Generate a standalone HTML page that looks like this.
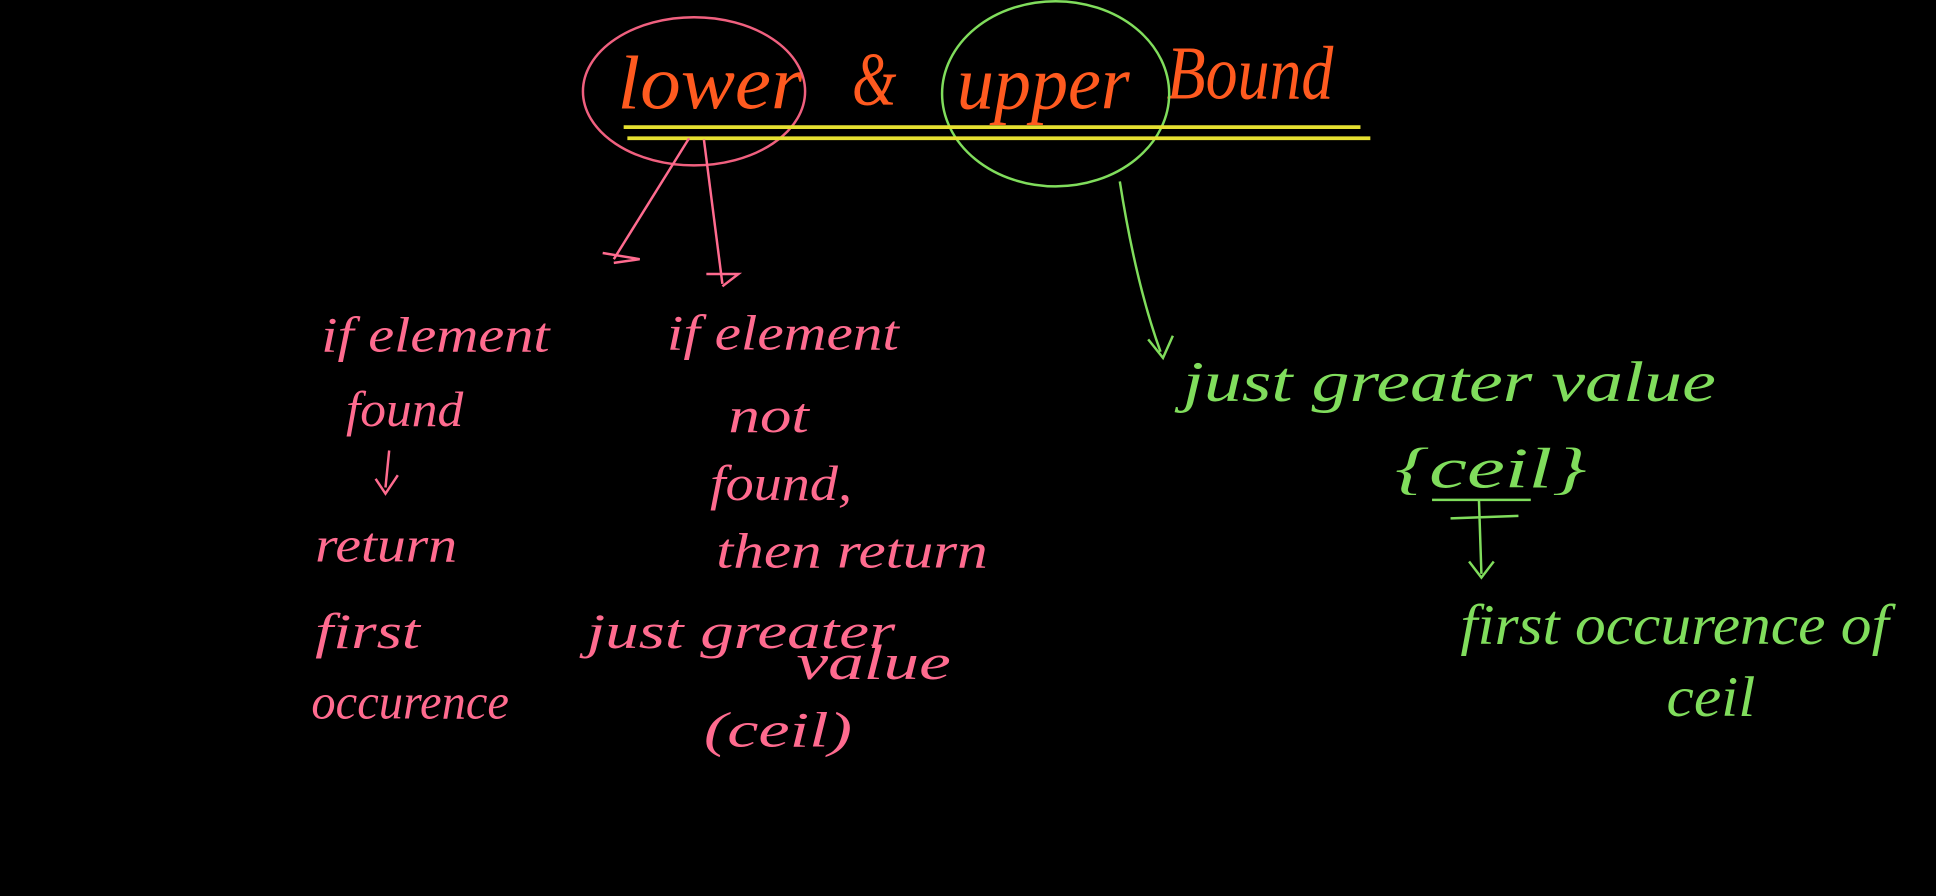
<!DOCTYPE html>
<html><head><meta charset="utf-8">
<style>
html,body{margin:0;padding:0;background:#000;width:1936px;height:896px;overflow:hidden}
svg{display:block}
text{font-family:"Liberation Serif",serif;font-style:italic}
</style></head>
<body>
<svg width="1936" height="896" viewBox="0 0 1568 726" xmlns="http://www.w3.org/2000/svg">
<rect width="1568" height="726" fill="#000"/>
<g fill="#ff5a1f" font-size="62" lengthAdjust="spacingAndGlyphs">
<text x="500" y="88" textLength="150" lengthAdjust="spacingAndGlyphs">lower</text>
<text x="690" y="85" textLength="36" lengthAdjust="spacingAndGlyphs">&amp;</text>
<text x="775" y="88" textLength="140" lengthAdjust="spacingAndGlyphs">upper</text>
<text x="945" y="80" textLength="135" lengthAdjust="spacingAndGlyphs">Bound</text>
</g>
<ellipse cx="562" cy="74" rx="90" ry="60" fill="none" stroke="#f0607f" stroke-width="2"/>
<ellipse cx="855" cy="76" rx="92" ry="75" fill="none" stroke="#80dd5c" stroke-width="2"/>
<line x1="505" y1="103" x2="1102" y2="103" stroke="#e6e030" stroke-width="3"/>
<line x1="508" y1="112" x2="1110" y2="112" stroke="#e6e030" stroke-width="3"/>
<g stroke="#ff6b8f" stroke-width="2" fill="none">
<path d="M558 112 L497 210"/><path d="M488 205 L518 210 L497 213"/>
<path d="M570 113 L585 230"/><path d="M572 222 L598 222 L585 232"/>
<path d="M315 365 L312 395 M304 388 L312 400 L322 385"/>
</g>
<g stroke="#80dd5c" stroke-width="2" fill="none">
<path d="M907 147 Q920 230 940 285"/><path d="M930 275 L942 290 L950 272"/>
<path d="M1198 405 L1200 465 M1175 420 L1230 418 M1190 455 L1200 468 L1210 455"/>
<path d="M1160 405 L1240 405"/>
</g>
<g fill="#ff6b8f" font-size="40">
<text x="260" y="285" textLength="185" lengthAdjust="spacingAndGlyphs">if element</text>
<text x="280" y="345" textLength="95" lengthAdjust="spacingAndGlyphs">found</text>
<text x="255" y="455" textLength="115" lengthAdjust="spacingAndGlyphs">return</text>
<text x="255" y="525" textLength="85" lengthAdjust="spacingAndGlyphs">first</text>
<text x="252" y="582" textLength="160" lengthAdjust="spacingAndGlyphs">occurence</text>
<text x="540" y="283" textLength="188" lengthAdjust="spacingAndGlyphs">if element</text>
<text x="590" y="350" textLength="65" lengthAdjust="spacingAndGlyphs">not</text>
<text x="575" y="405" textLength="115" lengthAdjust="spacingAndGlyphs">found,</text>
<text x="580" y="460" textLength="220" lengthAdjust="spacingAndGlyphs">then return</text>
<text x="475" y="525" textLength="250" lengthAdjust="spacingAndGlyphs">just greater</text>
<text x="645" y="550" textLength="125" lengthAdjust="spacingAndGlyphs">value</text>
<text x="570" y="605" textLength="120" lengthAdjust="spacingAndGlyphs">(ceil)</text>
</g>
<g fill="#80dd5c" font-size="46">
<text x="958" y="325" textLength="432" lengthAdjust="spacingAndGlyphs">just greater value</text>
<text x="1130" y="395" textLength="155" lengthAdjust="spacingAndGlyphs">{ceil}</text>
<text x="1183" y="522" textLength="347" lengthAdjust="spacingAndGlyphs">first occurence of</text>
<text x="1350" y="580" textLength="72" lengthAdjust="spacingAndGlyphs">ceil</text>
</g>
</svg>
</body></html>
